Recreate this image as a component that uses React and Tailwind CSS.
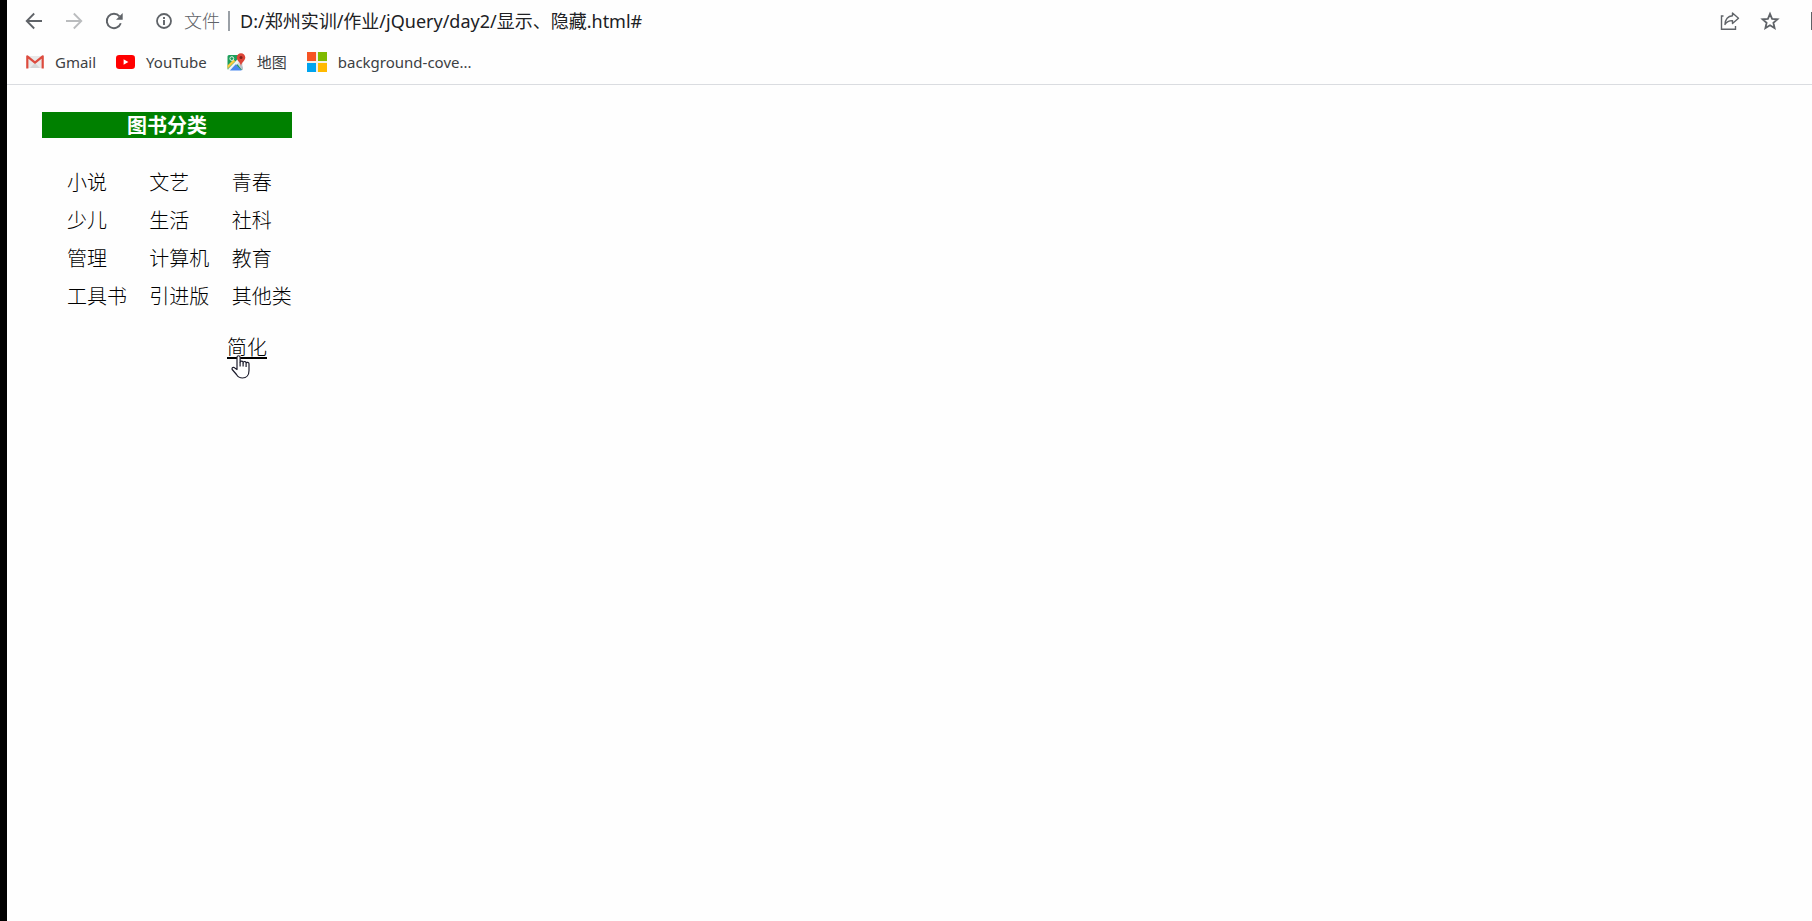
import { useState } from "react";

const categories = [
  "小说", "文艺", "青春",
  "少儿", "生活", "社科",
  "管理", "计算机", "教育",
  "工具书", "引进版", "其他类",
];

const GmailIcon = () => (
  <svg className="w-[18px] h-[14px]" viewBox="0 0 18 14">
    <path d="M1 1h16v12H1z" fill="#e9e9e9" />
    <path d="M4 13l5-5 5 5z" fill="#d6d6d6" />
    <path d="M1.3 13.5V1.3L9 7.6l7.7-6.3v12.2" fill="none" stroke="#dd4b3e" strokeWidth="2.2" strokeLinejoin="round" />
  </svg>
);

const YouTubeIcon = () => (
  <svg className="w-[19px] h-[14px]" viewBox="0 0 19 14">
    <rect width="19" height="14" rx="3.2" fill="#ff0000" />
    <path d="M7.6 4.2v5.6l4.8-2.8z" fill="#fff" />
  </svg>
);

const MapsIcon = () => (
  <svg className="w-[19px] h-[19px]" viewBox="0 0 19 19">
    <path d="M2 2h13v15H2a1.5 1.5 0 0 1-1.5-1.5v-12A1.5 1.5 0 0 1 2 2z" fill="#1e9f5b" />
    <path d="M15.5 6v10.5l-6-6z" fill="#cfd5da" />
    <path d="M.8 16.3L11.5 5.2l2.3 2.3L3.5 17.5H2z" fill="#f3f3f3" />
    <path d="M.5 12.5l6-6 1.8 1.8-7.8 7.5z" fill="#fcca3f" />
    <path d="M8.7 11.3l6 6.2H2.9z" fill="#4a87ee" />
    <path d="M12 13.3l2-2 2 3v1.7a1.5 1.5 0 0 1-.8 1.3z" fill="#b9c2ca" />
    <circle cx="4.8" cy="5.6" r="1.9" fill="none" stroke="#e6f4ea" strokeWidth="1" />
    <path d="M14 .3a4.3 4.3 0 0 0-4.3 4.3c0 3.2 3.5 4.4 4.3 8.4.8-4 4.3-5.2 4.3-8.4A4.3 4.3 0 0 0 14 .3z" fill="#dc4437" />
    <circle cx="14" cy="4.6" r="1.5" fill="#7c2119" />
  </svg>
);

const MicrosoftIcon = () => (
  <svg className="w-5 h-5" viewBox="0 0 20 20">
    <path d="M0 0h20v20H0z" fill="#f3efe6" />
    <path d="M0 0h9v9H0z" fill="#f65323" />
    <path d="M11 0h9v9h-9z" fill="#7fba00" />
    <path d="M0 11h9v9H0z" fill="#00a4ef" />
    <path d="M11 11h9v9h-9z" fill="#ffb900" />
  </svg>
);

const bookmarks = [
  { icon: GmailIcon, label: "Gmail" },
  { icon: YouTubeIcon, label: "YouTube" },
  { icon: MapsIcon, label: "地图" },
  { icon: MicrosoftIcon, label: "background-cove..." },
];

const ArrowIcon = ({ className }) => (
  <svg className={className} viewBox="0 0 18 18" fill="none" stroke="currentColor" strokeWidth="1.8">
    <path d="M17 9H2M9.2 1.5L1.7 9l7.5 7.5" />
  </svg>
);

const Toolbar = () => {
  const [url, setUrl] = useState("D:/郑州实训/作业/jQuery/day2/显示、隐藏.html#");

  return (
    <div className="flex items-center h-[42px] pl-[18px] text-[#5f6368]">
      <div className="flex items-center gap-[22px]">
        <button aria-label="Back">
          <ArrowIcon className="w-[18px] h-[18px]" />
        </button>
        <button aria-label="Forward" className="text-[#babcbe]">
          <ArrowIcon className="w-[18px] h-[18px] rotate-180" />
        </button>
        <button aria-label="Reload">
          <svg className="w-[18px] h-[18px]" viewBox="0 0 18 18" fill="none" stroke="currentColor" strokeWidth="1.9">
            <path d="M15.8 11.3A7.2 7.2 0 1 1 14.5 4.3" />
            <path d="M17.7 1v6.7H11z" fill="currentColor" stroke="none" />
          </svg>
        </button>
      </div>
      <button aria-label="Site information" className="flex items-center ml-[33px]">
        <svg className="w-4 h-4" viewBox="0 0 16 16" fill="none" stroke="currentColor">
          <circle cx="8" cy="8" r="7" strokeWidth="1.8" />
          <path d="M8 7v5M8 4v1.9" strokeWidth="1.9" />
        </svg>
        <span className="ml-3 text-lg leading-6 font-light">文件</span>
      </button>
      <span className="w-0.5 h-5 ml-2 bg-[#9aa0a6]" />
      <input
        aria-label="Address"
        className="flex-1 min-w-0 ml-2.5 text-lg leading-6 text-[#202124] bg-transparent outline-none"
        value={url}
        onChange={(e) => setUrl(e.target.value)}
      />
      <button aria-label="Share">
        <svg className="w-5 h-5" viewBox="0 0 20 20" fill="none" stroke="currentColor" strokeWidth="1.4">
          <path d="M3.5 5H1.5v13.3h14V15" />
          <path d="M12.5 2l6 5.2-6 5.3V9.6C9 9.5 6.700 10.6 5 13.5c.3-5 3-8.3 7.5-8.7z" strokeLinejoin="round" />
        </svg>
      </button>
      <button aria-label="Bookmark this page" className="ml-5">
        <svg className="w-5 h-5" viewBox="0 0 20 20" fill="none" stroke="currentColor" strokeWidth="1.8">
          <path d="M10 2.8l2.1 5 5.4.5-4.1 3.5 1.2 5.3-4.6-2.8-4.6 2.8 1.2-5.3L2.5 8.3l5.4-.5z" />
        </svg>
      </button>
      <span className="w-px h-[18px] ml-[31px] bg-[#5f6368]" />
    </div>
  );
};

const BookmarksBar = () => (
  <nav className="flex items-center gap-5 h-[43px] pl-[19px] pb-0.5 border-b border-[#dadce0] text-[15px] leading-5 text-[#3c4043]">
    {bookmarks.map(({ icon: Icon, label }) => (
      <a key={label} href="#" className="flex items-center gap-[11px]">
        <Icon />
        {label}
      </a>
    ))}
  </nav>
);

const HandCursor = () => (
  <svg className="absolute left-1 top-5 w-[19px] h-6 pointer-events-none" viewBox="0 0 19 24">
    <path
      d="M6 14.5V2.3a1.5 1.5 0 0 1 3.1 0V7.5a1.5 1.5 0 0 1 3 .3 1.5 1.5 0 0 1 3 .5 1.5 1.5 0 0 1 2.9.7v6.5c0 4.5-2.5 7.5-6.5 7.5-3 0-4.7-1.2-6-3.5L1.2 14.5c-.7-1.8 1.3-2.8 2.6-1.6z"
      fill="#fff"
      stroke="#1c1c2c"
      strokeWidth="1.2"
      strokeLinejoin="round"
    />
    <path d="M9.1 7.5v4M12.1 8v3.5M15.1 8.5V12" stroke="#1c1c2c" strokeWidth="1.2" />
  </svg>
);

const BookCategories = () => {
  const [expanded, setExpanded] = useState(true);
  const shown = expanded ? categories : categories.slice(0, 6);

  return (
    <section className="w-[250px] text-xl text-black">
      <h3 className="pt-0.5 font-bold leading-6 text-center text-white bg-[#008000]">图书分类</h3>
      <ul className="grid grid-cols-3 gap-x-[22px] gap-y-3 mt-8 pl-[25px] leading-[26px] font-light whitespace-nowrap">
        {shown.map((name) => (
          <li key={name}>{name}</li>
        ))}
      </ul>
      <div className="flex justify-end mt-[25px] pr-[25px]">
        <a
          href="#"
          className="relative leading-[26px] font-light underline decoration-2 underline-offset-2"
          onClick={(e) => {
            e.preventDefault();
            setExpanded(!expanded);
          }}
        >
          {expanded ? "简化" : "更多"}
          <HandCursor />
        </a>
      </div>
    </section>
  );
};

const App = () => (
  <div
    lang="zh-CN"
    className="min-h-screen overflow-hidden border-l-[7px] border-black bg-[#fefefe] font-['Noto_Sans','Noto_Sans_CJK_SC',sans-serif]"
  >
    <header>
      <Toolbar />
      <BookmarksBar />
    </header>
    <main className="px-[35px] pt-[27px]">
      <BookCategories />
    </main>
  </div>
);

export default App;
